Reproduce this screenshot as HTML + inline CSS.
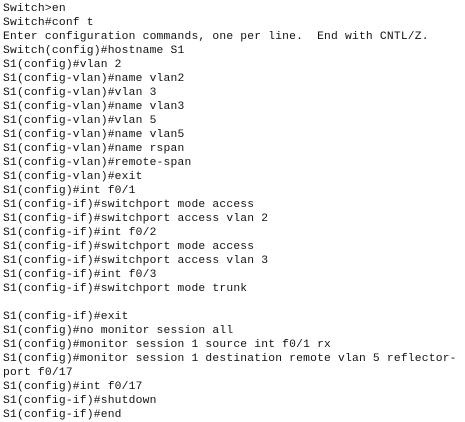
<!DOCTYPE html>
<html><head><style>
html,body{margin:0;padding:0;background:#fff;width:465px;height:422px;overflow:hidden}
pre{margin:0;padding:2px 0 0 3px;font-family:"Liberation Mono","Courier New",monospace;font-size:11.3px;letter-spacing:0.2px;line-height:14px;color:#111}
</style></head><body><pre>Switch&gt;en
Switch#conf t
Enter configuration commands, one per line.  End with CNTL/Z.
Switch(config)#hostname S1
S1(config)#vlan 2
S1(config-vlan)#name vlan2
S1(config-vlan)#vlan 3
S1(config-vlan)#name vlan3
S1(config-vlan)#vlan 5
S1(config-vlan)#name vlan5
S1(config-vlan)#name rspan
S1(config-vlan)#remote-span
S1(config-vlan)#exit
S1(config)#int f0/1
S1(config-if)#switchport mode access
S1(config-if)#switchport access vlan 2
S1(config-if)#int f0/2
S1(config-if)#switchport mode access
S1(config-if)#switchport access vlan 3
S1(config-if)#int f0/3
S1(config-if)#switchport mode trunk

S1(config-if)#exit
S1(config)#no monitor session all
S1(config)#monitor session 1 source int f0/1 rx
S1(config)#monitor session 1 destination remote vlan 5 reflector-
port f0/17
S1(config)#int f0/17
S1(config-if)#shutdown
S1(config-if)#end</pre></body></html>
